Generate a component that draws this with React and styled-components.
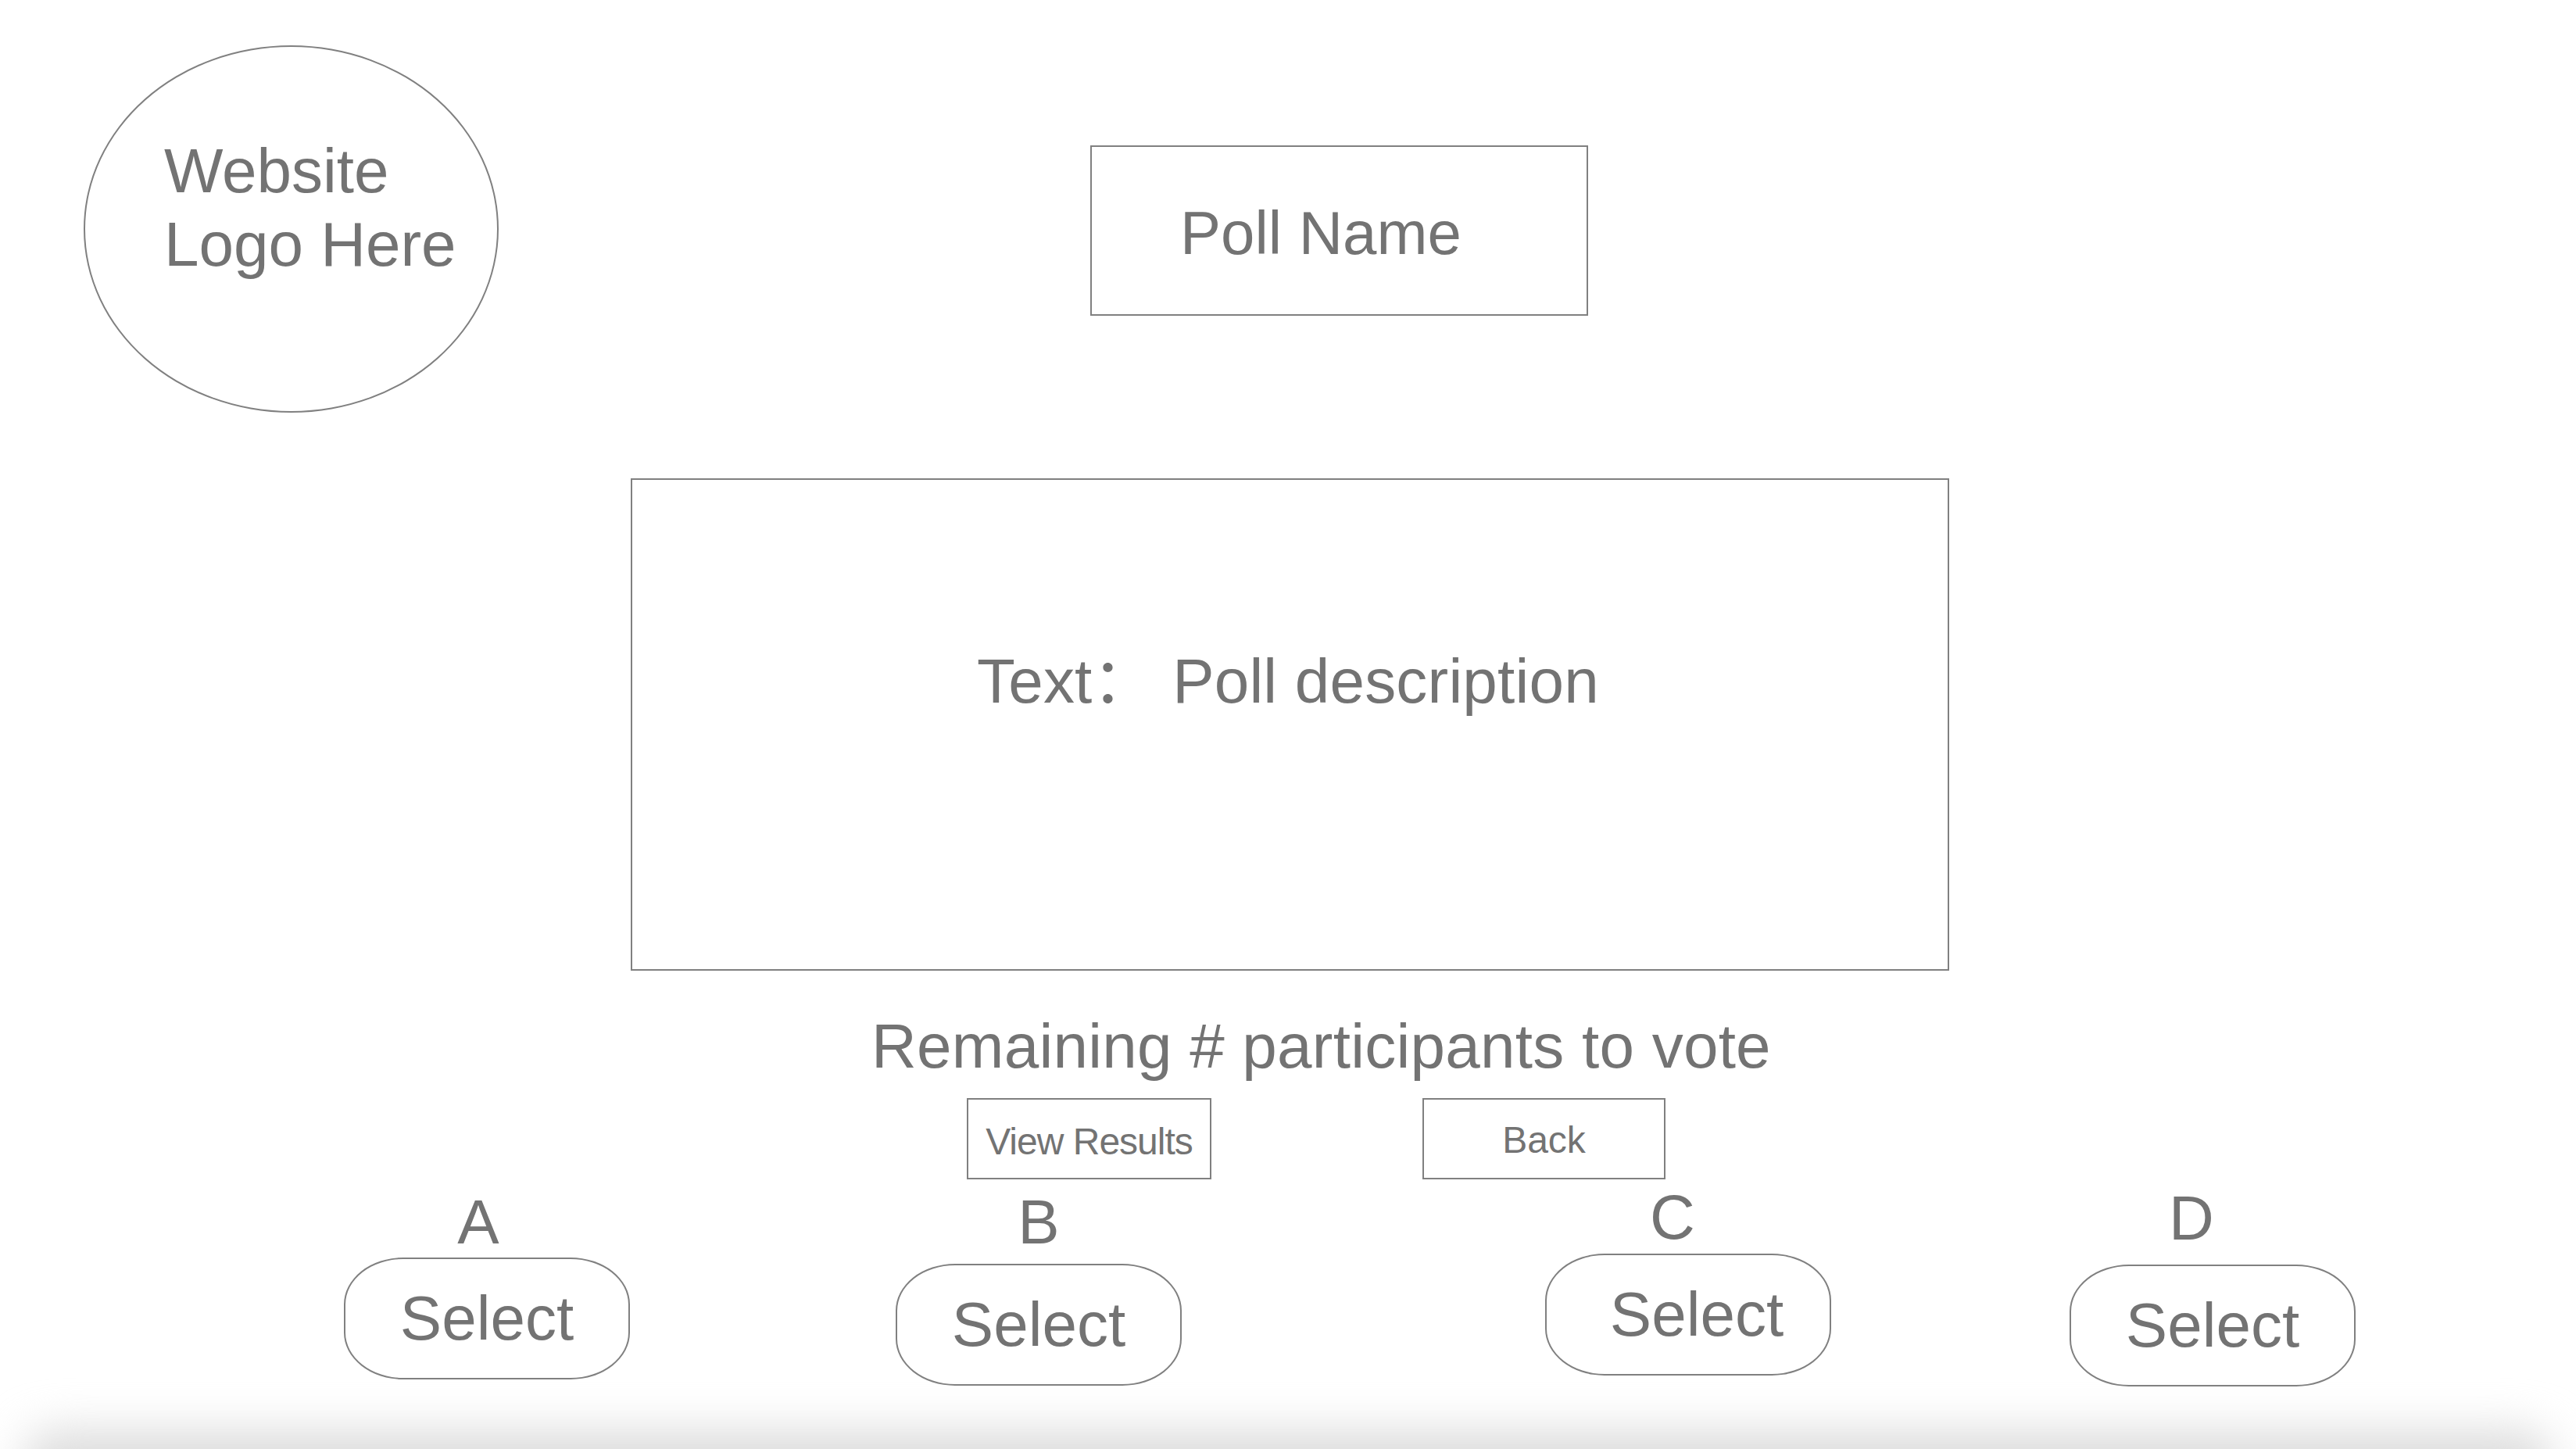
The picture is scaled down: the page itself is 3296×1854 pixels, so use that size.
import styled, { createGlobalStyle } from 'styled-components';

const ink = '#737373';
const line = '#808080';

const GlobalStyle = createGlobalStyle`
  body {
    margin: 0;
    background: #fff;
  }
`;

const options = [
  { id: 'A', left: 440, top: 6, gap: 5, nudge: 11, shift: 0 },
  { id: 'B', left: 340, top: 6, gap: 13, nudge: 0, shift: 0 },
  { id: 'C', left: 465, top: 0, gap: 6, nudge: 20, shift: 22 },
  { id: 'D', left: 305, top: 1, gap: 19, nudge: 27, shift: 0 },
];

const App = () => {
  return (
    <Page>
      <GlobalStyle />
      <Header>
        <Logo>
          <LogoText>Website<br />Logo Here</LogoText>
        </Logo>
        <TitleBox>
          <Title>Poll Name</Title>
        </TitleBox>
      </Header>

      <DescriptionBox>
        <Description>Text： Poll description</Description>
      </DescriptionBox>

      <Remaining>Remaining # participants to vote</Remaining>

      <Actions>
        <ActionButton $width={313} $tight>View Results</ActionButton>
        <ActionButton $width={311}>Back</ActionButton>
      </Actions>

      <Options>
        {options.map(({ id, left, top, gap, nudge, shift }) => (
          <Option key={id} $left={left} $top={top} $gap={gap}>
            <Letter $nudge={nudge}>{id}</Letter>
            <SelectButton $shift={shift}>Select</SelectButton>
          </Option>
        ))}
      </Options>

      <Shade />
    </Page>
  );
};

export default App;

const Page = styled.div`
  width: 3296px;
  height: 1854px;
  overflow: hidden;
  display: flex;
  flex-direction: column;
  font-family: 'Liberation Sans', Arial, 'Noto Sans CJK SC', sans-serif;
  color: ${ink};
`;

const Header = styled.header`
  display: flex;
  align-items: flex-start;
  padding: 58px 0 0 107px;
`;

const Logo = styled.div`
  box-sizing: border-box;
  width: 531px;
  height: 470px;
  border: 2px solid ${line};
  border-radius: 50%;
  padding: 112px 0 0 101px;
`;

const LogoText = styled.div`
  font-size: 80px;
  line-height: 94px;
`;

const TitleBox = styled.div`
  box-sizing: border-box;
  display: flex;
  align-items: center;
  width: 637px;
  height: 218px;
  margin: 128px 0 0 757px;
  padding: 6px 0 0 113px;
  border: 2px solid ${line};
`;

const Title = styled.h1`
  margin: 0;
  font-size: 78px;
  font-weight: 400;
  line-height: 1;
`;

const DescriptionBox = styled.section`
  box-sizing: border-box;
  width: 1687px;
  height: 630px;
  margin: 84px 0 0 807px;
  padding: 212px 0 0 441px;
  border: 2px solid ${line};
`;

const Description = styled.p`
  margin: 0;
  font-size: 80px;
  line-height: 92px;
  white-space: pre;
  letter-spacing: 0.2px;
`;

const Remaining = styled.p`
  margin: 51px 0 0;
  padding-left: 1115px;
  font-size: 80px;
  line-height: 92px;
  letter-spacing: 0.25px;
`;

const Actions = styled.div`
  display: flex;
  gap: 270px;
  margin-top: 20px;
  padding-left: 1237px;
`;

const ActionButton = styled.button`
  box-sizing: border-box;
  display: flex;
  align-items: center;
  justify-content: center;
  width: ${({ $width }) => $width}px;
  height: 104px;
  padding: ${({ $tight }) => ($tight ? '6px' : '2px')} 0 0;
  background: #fff;
  border: 2px solid ${line};
  border-radius: 0;
  font-family: inherit;
  font-size: 48px;
  letter-spacing: ${({ $tight }) => ($tight ? '-1px' : '0')};
  color: ${ink};
`;

const Options = styled.div`
  display: flex;
  align-items: flex-start;
  margin-top: 9px;
`;

const Option = styled.div`
  display: flex;
  flex-direction: column;
  gap: ${({ $gap }) => $gap}px;
  width: 366px;
  margin-left: ${({ $left }) => $left}px;
  margin-top: ${({ $top }) => $top}px;
`;

const Letter = styled.span`
  display: block;
  padding-right: ${({ $nudge }) => $nudge * 2}px;
  font-size: 80px;
  line-height: 80px;
  text-align: center;
`;

const SelectButton = styled.button`
  box-sizing: border-box;
  display: flex;
  align-items: center;
  justify-content: center;
  width: 366px;
  height: 156px;
  padding: 0 0 0 ${({ $shift }) => $shift}px;
  background: #fff;
  border: 2px solid ${line};
  border-radius: 76px / 60px;
  font-family: inherit;
  font-size: 80px;
  color: ${ink};
`;

const Shade = styled.div`
  flex: none;
  height: 140px;
  margin: auto 30px -116px;
  background: #dcdcdc;
  border-radius: 40px;
  filter: blur(28px);
`;
